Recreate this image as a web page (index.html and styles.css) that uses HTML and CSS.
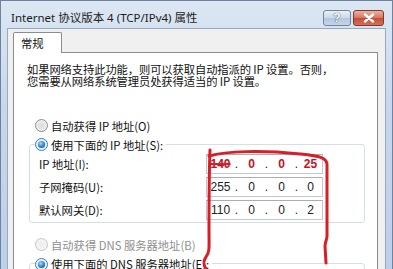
FILE: index.html
```html
<!DOCTYPE html>
<html lang="zh-CN">
<head>
<meta charset="utf-8">
<title>Internet 协议版本 4 (TCP/IPv4) 属性</title>
<link rel="stylesheet" href="styles.css">
</head>
<body>
<div class="window">
  <div class="titlebar">
    <span class="title">Internet 协议版本 4 (TCP/IPv4) 属性</span>
    <div class="caption-btns">
      <span class="btn help">?</span>
      <span class="btn close"><svg width="12" height="10" viewBox="0 0 12 10"><path d="M2 1.5 L10 8.5 M10 1.5 L2 8.5" stroke="#fff" stroke-width="2.4" stroke-linecap="round"/></svg></span>
    </div>
  </div>
  <div class="client">
    <div class="tabs"><div class="tab">常规</div></div>
    <div class="panel">
      <p class="desc"><span class="line">如果网络支持此功能，则可以获取自动指派的 IP 设置。否则，</span><span class="line">您需要从网络系统管理员处获得适当的 IP 设置。</span></p>
      <div class="opt first"><span class="radio"></span>自动获得 IP 地址(O)</div>
      <div class="group">
        <div class="opt legend"><span class="radio on"></span>使用下面的 IP 地址(S):</div>
        <div class="fields">
          <span class="lbl">IP 地址(I):</span>
          <div class="ip redacted"><span class="o strike">140</span><span class="d">.</span><span class="o">0</span><span class="d">.</span><span class="o">0</span><span class="d">.</span><span class="o">25</span></div>
          <span class="lbl">子网掩码(U):</span>
          <div class="ip"><span class="o">255</span><span class="d">.</span><span class="o">0</span><span class="d">.</span><span class="o">0</span><span class="d">.</span><span class="o">0</span></div>
          <span class="lbl">默认网关(D):</span>
          <div class="ip"><span class="o">110</span><span class="d">.</span><span class="o">0</span><span class="d">.</span><span class="o">0</span><span class="d">.</span><span class="o">2</span></div>
        </div>
      </div>
      <div class="opt dns disabled"><span class="radio dis"></span>自动获得 DNS 服务器地址(B)</div>
      <div class="group second">
        <div class="opt legend last"><span class="radio on"></span>使用下面的 DNS 服务器地址(E):</div>
      </div>
    </div>
  </div>
</div>
<svg class="annot" width="393" height="269" viewBox="0 0 393 269">
  <path d="M210 150 C209 175 209 205 209 232 C209 246 210 252 206 257 C203 261 203 264 206 269" fill="none" stroke="#d61f28" stroke-width="3" stroke-linecap="round"/>
  <path d="M209 156 C226 151 262 150 300 154 C318 156 328 157 327 166 L327 236 C327 240 325 242 325 246 L326 263" fill="none" stroke="#d61f28" stroke-width="3" stroke-linecap="round"/>
</svg>
</body>
</html>
```
FILE: styles.css
```css
html, body {
  margin: 0;
  height: 269px;
  overflow: hidden;
}
body {
  width: 393px;
  position: relative;
  background: linear-gradient(#dce7f3, #c6d7ec 40%, #bcd0e8);
  font-family: "Noto Sans CJK SC", sans-serif;
  color: #111;
}
.window {
  box-sizing: border-box;
  height: 269px;
  border: 1px solid #6f839e;
  border-bottom: none;
  padding: 0 6px;
}
.titlebar {
  height: 27px;
  display: flex;
  justify-content: space-between;
  align-items: flex-start;
}
.title {
  margin: 10px 0 0 4px;
  font-family: "Noto Sans", "Noto Sans CJK SC", sans-serif;
  font-size: 11.5px;
  line-height: 14px;
  color: #1b1b1b;
}
.caption-btns {
  display: flex;
  gap: 2px;
  margin: 9px 2px 0 0;
}
.btn {
  box-sizing: border-box;
  height: 16px;
  border-radius: 3px;
  display: flex;
  align-items: center;
  justify-content: center;
}
.help {
  width: 28px;
  border: 1px solid #71849e;
  background: linear-gradient(#eaf0f8, #cbd9ea 50%, #b3c6de 51%, #c4d5ea);
  color: #fff;
  font-family: "Liberation Sans", sans-serif;
  font-weight: bold;
  font-size: 12px;
  text-shadow: 0 0 1px #3b4a60, 0 0 1px #3b4a60;
}
.close {
  width: 31px;
  border: 1px solid #8d3323;
  background: linear-gradient(#eab2a3, #d6745e 50%, #c44d34 51%, #d1705a);
}
.client {
  box-sizing: border-box;
  height: 241px;
  background: #f0f0f0;
  border: 1px solid #97a9c0;
  border-bottom: none;
  padding: 3px 7px 0 5px;
  overflow: hidden;
}
.tabs {
  display: flex;
}
.tab {
  position: relative;
  z-index: 1;
  box-sizing: border-box;
  width: 49px;
  height: 21px;
  margin-bottom: -1px;
  border: 1px solid #898c95;
  border-bottom: none;
  border-radius: 2px 2px 0 0;
  background: #fff;
  padding-left: 7px;
  font-size: 11.3px;
  line-height: 20px;
}
.panel {
  box-sizing: border-box;
  width: 365px;
  height: 218px;
  background: #fff;
  border: 1px solid #898c95;
  border-bottom: none;
  padding: 0 12px 0 13px;
  overflow: hidden;
}
.desc {
  display: flex;
  flex-direction: column;
  margin: 10px 0 0;
  font-size: 11.3px;
  letter-spacing: -0.1px;
}
.desc .line {
  display: block;
  height: 12px;
  line-height: 12px;
  white-space: nowrap;
}
.opt {
  display: flex;
  align-items: center;
  height: 19px;
  font-size: 11.3px;
}
.opt.first {
  margin-top: 29px;
  padding-left: 8px;
}
.opt.dns {
  margin-top: 12px;
  padding-left: 8px;
}
.disabled {
  color: #8f8f8f;
}
.radio {
  position: relative;
  flex: none;
  box-sizing: border-box;
  width: 13px;
  height: 13px;
  margin-right: 3px;
  border-radius: 50%;
  border: 1px solid #8c8c8c;
  background: radial-gradient(circle, #dcdcdc 0, #e6e6e6 45%, #fbfbfb 100%);
}
.radio.on {
  border-color: #3d7bbf;
  background: radial-gradient(circle, #cfe6f9 0, #e9f3fc 70%, #fff 100%);
}
.radio.on::after {
  content: "";
  position: absolute;
  left: 2px;
  top: 2px;
  width: 7px;
  height: 7px;
  border-radius: 50%;
  background: radial-gradient(circle at 40% 35%, #a6dcff 0, #2b7fcb 55%, #123f7a 100%);
}
.radio.dis {
  border-color: #c4c4c4;
  background: radial-gradient(circle, #ececec 0, #f4f4f4 60%, #fafafa 100%);
}
.group {
  margin-top: 9px;
  margin-left: 2px;
  border: 1px solid #d5dfe5;
  border-radius: 3px;
  padding-bottom: 2px;
}
.group.second {
  height: 30px;
}
.legend {
  width: fit-content;
  margin: -10px 0 0 5px;
  padding-right: 3px;
  background: #fff;
}
.legend.last {
  height: 14px;
  line-height: 13px;
  margin-top: -7px;
}
.fields {
  display: grid;
  grid-template-columns: 167px 117px;
  grid-auto-rows: 20px;
  row-gap: 3px;
  padding-left: 9px;
}
.lbl {
  display: flex;
  align-items: center;
  font-size: 11.3px;
}
.ip {
  box-sizing: border-box;
  height: 20px;
  border: 1px solid #c3c8cf;
  border-top-color: #a9aeb6;
  display: grid;
  grid-template-columns: 27px 5px 25px 5px 25px 5px 23px;
  align-items: center;
  font-family: "Liberation Sans", sans-serif;
  font-size: 12px;
  color: #222;
}
.ip .o, .ip .d {
  text-align: center;
}
.redacted .o {
  color: #c8121f;
  font-weight: bold;
}
.redacted .strike {
  text-decoration: line-through;
  text-decoration-color: #d61f28;
  text-decoration-thickness: 2px;
}
.annot {
  position: absolute;
  left: 0;
  top: 0;
  pointer-events: none;
}
```
